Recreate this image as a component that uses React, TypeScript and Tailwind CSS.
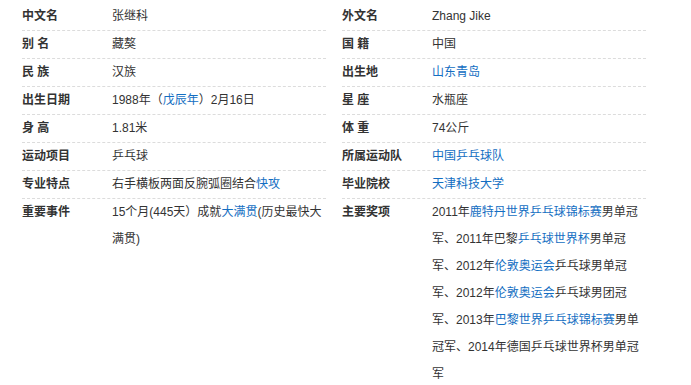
import type { ReactNode } from "react";

type Row = { label: string; value: ReactNode };

const A = ({ children }: { children: ReactNode }) => (
  <a href="#" className="text-[#136ec2] no-underline">
    {children}
  </a>
);

const left: Row[] = [
  { label: "中文名", value: "张继科" },
  { label: "别 名", value: "藏獒" },
  { label: "民 族", value: "汉族" },
  {
    label: "出生日期",
    value: (
      <>
        1988年（<A>戊辰年</A>）2月16日
      </>
    ),
  },
  { label: "身 高", value: "1.81米" },
  { label: "运动项目", value: "乒乓球" },
  {
    label: "专业特点",
    value: (
      <>
        右手横板两面反腕弧圈结合<A>快攻</A>
      </>
    ),
  },
  {
    label: "重要事件",
    value: (
      <>
        15个月(445天）成就<A>大满贯</A>(历史最快大满贯)
      </>
    ),
  },
];

const right: Row[] = [
  { label: "外文名", value: "Zhang Jike" },
  { label: "国 籍", value: "中国" },
  { label: "出生地", value: <A>山东青岛</A> },
  { label: "星 座", value: "水瓶座" },
  { label: "体 重", value: "74公斤" },
  { label: "所属运动队", value: <A>中国乒乓球队</A> },
  { label: "毕业院校", value: <A>天津科技大学</A> },
  {
    label: "主要奖项",
    value: (
      <>
        2011年<A>鹿特丹世界乒乓球锦标赛</A>男单冠军、2011年巴黎<A>乒乓球世界杯</A>男单冠军、2012年<A>伦敦奥运会</A>乒乓球男单冠军、2012年<A>伦敦奥运会</A>乒乓球男团冠军、2013年<A>巴黎世界乒乓球锦标赛</A>男单冠军、2014年德国乒乓球世界杯男单冠军
      </>
    ),
  },
];

function Column({ rows }: { rows: Row[] }) {
  return (
    <dl className="w-[304px]">
      {rows.map((r, i) => (
        <div
          key={r.label}
          className={
            i < rows.length - 1
              ? "flex border-b border-dashed border-[#dcdcdc]"
              : "flex"
          }
        >
          <dt className="w-[90px] shrink-0 whitespace-pre font-bold">{r.label}</dt>
          <dd className="w-[214px]">{r.value}</dd>
        </div>
      ))}
    </dl>
  );
}

export default function App() {
  return (
    <div
      className="flex h-[385px] gap-4 overflow-hidden bg-white pl-[22px] pt-[3px] text-[12px] leading-[27px] text-[#333]"
      style={{ fontFamily: '"Liberation Sans", "Noto Sans CJK SC", sans-serif' }}
    >
      <Column rows={left} />
      <Column rows={right} />
    </div>
  );
}
